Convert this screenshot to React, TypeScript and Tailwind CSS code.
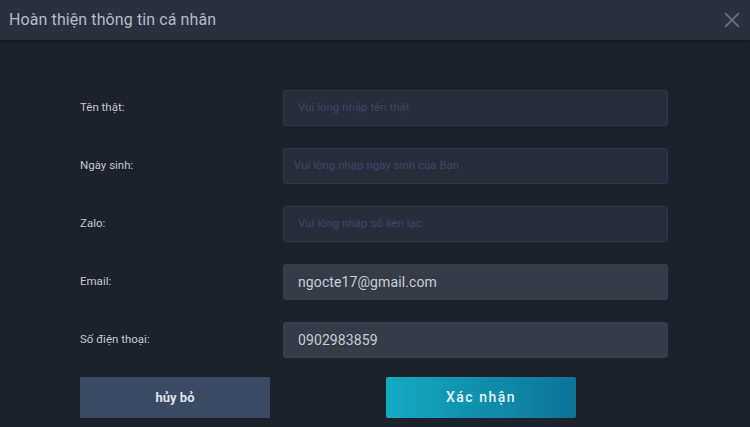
import React from "react";

const rows = [
  { label: "Tên thật:", placeholder: "Vui lòng nhập tên thật", value: "", pad: "pl-[14px]" },
  { label: "Ngày sinh:", placeholder: "Vui lòng nhập ngày sinh của Bạn", value: "", pad: "pl-[10px]" },
  { label: "Zalo:", placeholder: "Vui lòng nhập số liên lạc", value: "", pad: "pl-[14px]" },
  { label: "Email:", placeholder: "", value: "ngocte17@gmail.com", pad: "pl-[14px]" },
  { label: "Số điện thoại:", placeholder: "", value: "0902983859", pad: "pl-[14px]" },
];

export default function App() {
  return (
    <div
      className="w-[750px] h-[427px] bg-[#1d212c] flex flex-col overflow-hidden"
      style={{ fontFamily: "Roboto, 'Noto Sans', sans-serif" }}
    >
      <div className="h-[40px] bg-[#2a303d] flex items-center justify-between pl-[9px] pr-[10px] shadow-[0_1px_2px_rgba(0,0,0,0.3)]">
        <span className="text-[16px] text-[#b3bbc7] tracking-[0.1px]">Hoàn thiện thông tin cá nhân</span>
        <svg width="16" height="16" viewBox="0 0 16 16" className="text-[#6f7888]">
          <path d="M1.5 1.5 L14.5 14.5 M14.5 1.5 L1.5 14.5" stroke="currentColor" strokeWidth="1.6" strokeLinecap="round" />
        </svg>
      </div>
      <div className="flex flex-col pt-[50px] pl-[80px]">
        <div className="flex flex-col gap-[22px]">
          {rows.map((r) => (
            <div key={r.label} className="flex items-center">
              <div className="w-[203px] text-[11.5px] text-[#c3c8d1]">{r.label}</div>
              <div
                className={
                  "w-[385px] h-[36px] rounded-[3px] flex items-center " +
                  r.pad +
                  (r.value
                    ? " bg-[#353b47] border border-[#393f4b]"
                    : " bg-[#262c3a] border border-[#30374a]")
                }
              >
                {r.value ? (
                  <span className="text-[14px] text-[#c9cdd5] tracking-[0.1px]">{r.value}</span>
                ) : (
                  <span className="text-[11.5px] text-[#3d4866]">{r.placeholder}</span>
                )}
              </div>
            </div>
          ))}
        </div>
        <div className="flex mt-[19px] gap-[116px]">
          <button className="w-[190px] h-[41px] bg-[#3b4a63] text-[#dfe3e9] text-[13px] font-bold">
            hủy bỏ
          </button>
          <button className="w-[190px] h-[41px] rounded-[2px] bg-gradient-to-r from-[#15abc2] to-[#0c7496] text-[#e6f4f7] text-[14px] font-medium tracking-[1.5px]">
            Xác nhận
          </button>
        </div>
      </div>
    </div>
  );
}
